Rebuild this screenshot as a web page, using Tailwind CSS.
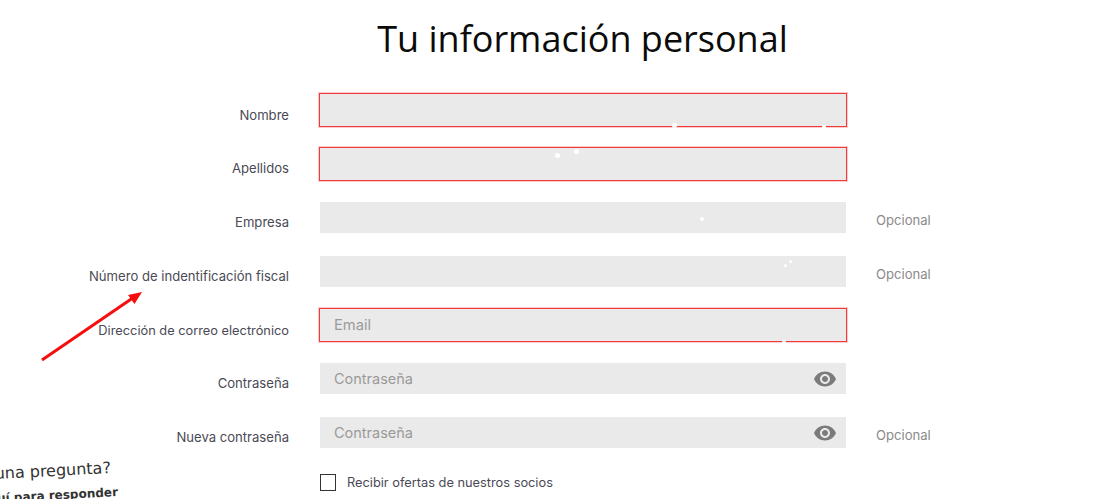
<!DOCTYPE html>
<html lang="es">
<head>
  <meta charset="UTF-8">
  <title>Tu información personal</title>
  <script src="https://cdn.jsdelivr.net/npm/@tailwindcss/browser@4"></script>
</head>
<body class="relative h-[499px] overflow-hidden bg-white font-['Inter','Liberation_Sans',sans-serif]">
  <h1 class="h-[83.4px] pl-[62px] pt-[14px] text-center font-['Open_Sans',sans-serif] text-[36px] leading-[50px] text-[#0b0b0b]">Tu información personal</h1>

  <form class="grid grid-cols-[289px_530px_auto] auto-rows-[53.67px] items-center text-[13.1px] text-[#4a4a55]">
    <!-- Nombre -->
    <label class="pt-[11px] text-right">Nombre</label>
    <input type="text" class="ml-[30px] h-[34px] w-[528px] border border-[#f03a3a] bg-[#eaeaea] shadow-[0_0_0_1px_rgba(255,0,0,0.2)]">
    <span></span>

    <!-- Apellidos -->
    <label class="pt-[10px] text-right">Apellidos</label>
    <input type="text" class="ml-[30px] h-[34px] w-[528px] border border-[#f03a3a] bg-[#eaeaea] shadow-[0_0_0_1px_rgba(255,0,0,0.2)]">
    <span></span>

    <!-- Empresa -->
    <label class="pt-[11px] text-right">Empresa</label>
    <input type="text" class="ml-[31px] h-[31px] w-[526px] bg-[#eaeaea]">
    <span class="pl-[57px] pt-[7px] text-[#8a8a8a]">Opcional</span>

    <!-- NIF -->
    <label class="pt-[11px] text-right">Número de indentificación fiscal</label>
    <input type="text" class="ml-[31px] h-[31px] w-[526px] bg-[#eaeaea]">
    <span class="pl-[57px] pt-[7px] text-[#8a8a8a]">Opcional</span>

    <!-- Email -->
    <label class="pt-[11px] text-right text-[12.8px]">Dirección de correo electrónico</label>
    <input type="text" placeholder="Email" class="ml-[30px] h-[34px] w-[528px] border border-[#f03a3a] bg-[#eaeaea] px-[14px] text-[14.7px] shadow-[0_0_0_1px_rgba(255,0,0,0.2)] placeholder:text-[#9a9a9a]">
    <span></span>

    <!-- Contraseña -->
    <label class="pt-[11px] text-right">Contraseña</label>
    <div class="relative ml-[31px] w-[526px]">
      <input type="password" placeholder="Contraseña" class="h-[31px] w-full bg-[#eaeaea] px-[14px] text-[14.5px] placeholder:text-[#9a9a9a]">
      <svg class="absolute right-[9px] top-[4px] h-6 w-6 fill-[#7b7b7b]" viewBox="0 0 24 24"><path d="M12 4.5C7 4.5 2.73 7.61 1 12c1.73 4.39 6 7.5 11 7.5s9.27-3.11 11-7.5c-1.73-4.39-6-7.5-11-7.5zM12 17c-2.76 0-5-2.24-5-5s2.24-5 5-5 5 2.24 5 5-2.24 5-5 5zm0-8c-1.66 0-3 1.34-3 3s1.34 3 3 3 3-1.34 3-3-1.34-3-3-3z"/></svg>
    </div>
    <span></span>

    <!-- Nueva contraseña -->
    <label class="pt-[11px] text-right">Nueva contraseña</label>
    <div class="relative ml-[31px] w-[526px]">
      <input type="password" placeholder="Contraseña" class="h-[31px] w-full bg-[#eaeaea] px-[14px] text-[14.5px] placeholder:text-[#9a9a9a]">
      <svg class="absolute right-[9px] top-[4px] h-6 w-6 fill-[#7b7b7b]" viewBox="0 0 24 24"><path d="M12 4.5C7 4.5 2.73 7.61 1 12c1.73 4.39 6 7.5 11 7.5s9.27-3.11 11-7.5c-1.73-4.39-6-7.5-11-7.5zM12 17c-2.76 0-5-2.24-5-5s2.24-5 5-5 5 2.24 5 5-2.24 5-5 5zm0-8c-1.66 0-3 1.34-3 3s1.34 3 3 3 3-1.34 3-3-1.34-3-3-3z"/></svg>
    </div>
    <span class="pl-[57px] pt-[7px] text-[#8a8a8a]">Opcional</span>

    <!-- Ofertas -->
    <span></span>
    <label class="ml-[31px] flex items-center gap-[11px] pb-[6px] text-[12.8px]">
      <span class="h-[17px] w-[16px] border border-[#333] bg-white"></span>
      Recibir ofertas de nuestros socios
    </label>
  </form>

  <!-- Flecha roja -->
  <svg class="absolute left-[36px] top-[286px] h-[80px] w-[112px]" viewBox="36 286 112 80">
    <line x1="42" y1="360" x2="132" y2="298.5" stroke="#f60d0d" stroke-width="3"/>
    <polygon points="142,292 128,295 134.5,304" fill="#f60d0d"/>
  </svg>

  <!-- Nota manuscrita -->
  <div class="absolute right-[992px] top-[458px] origin-right -rotate-3 whitespace-nowrap font-['DejaVu_Sans',cursive] text-[16px] leading-[20px] text-[#333]">¿Tienes una pregunta?</div>
  <div class="absolute right-[985px] top-[485px] origin-right -rotate-3 whitespace-nowrap font-['DejaVu_Sans',cursive] text-[12px] font-bold leading-[14px] text-[#333]">Estamos aquí para responder</div>

  <!-- Motas blancas -->
  <span class="absolute left-[672px] top-[123px] h-[5px] w-[5px] rounded-full bg-white"></span>
  <span class="absolute left-[822px] top-[125px] h-[4px] w-[4px] rounded-full bg-white"></span>
  <span class="absolute left-[555px] top-[153px] h-[5px] w-[5px] rounded-full bg-white"></span>
  <span class="absolute left-[574px] top-[149px] h-[5px] w-[5px] rounded-full bg-white"></span>
  <span class="absolute left-[700px] top-[217px] h-[4px] w-[4px] rounded-full bg-white"></span>
  <span class="absolute left-[784px] top-[264px] h-[3px] w-[3px] rounded-full bg-white"></span>
  <span class="absolute left-[789px] top-[260px] h-[3px] w-[3px] rounded-full bg-white"></span>
  <span class="absolute left-[782px] top-[340px] h-[4px] w-[4px] rounded-full bg-white"></span>
</body>
</html>
